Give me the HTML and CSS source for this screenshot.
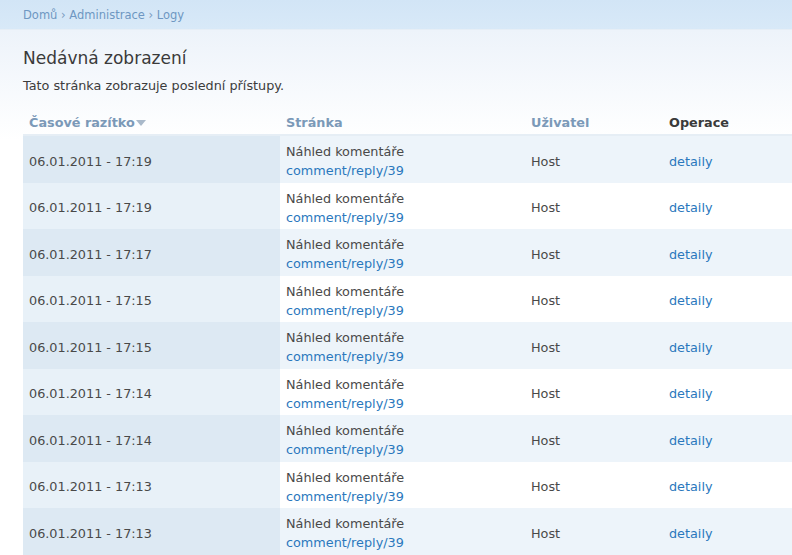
FILE: index.html
```html
<!DOCTYPE html>
<html lang="cs">
<head>
<meta charset="utf-8">
<title>Nedávná zobrazení</title>
<link rel="stylesheet" href="styles.css">
</head>
<body>
<div class="topbar">
  <nav class="breadcrumb"><a href="#">Domů</a> › <a href="#">Administrace</a> › <a href="#">Logy</a></nav>
</div>
<main class="content">
  <h2 class="title">Nedávná zobrazení</h2>
  <p class="desc">Tato stránka zobrazuje poslední přístupy.</p>
  <table class="log">
    <colgroup>
      <col class="c-time"><col class="c-page"><col class="c-user"><col class="c-op">
    </colgroup>
    <thead>
      <tr>
        <th class="sort"><a href="#">Časové razítko</a><span class="arrow"></span></th>
        <th class="sort"><a href="#">Stránka</a></th>
        <th class="sort"><a href="#">Uživatel</a></th>
        <th>Operace</th>
      </tr>
    </thead>
    <tbody>
      <tr class="odd"><td class="active">06.01.2011 - 17:19</td><td>Náhled komentáře<br><a href="#">comment/reply/39</a></td><td>Host</td><td><a href="#">detaily</a></td></tr>
      <tr class="even"><td class="active">06.01.2011 - 17:19</td><td>Náhled komentáře<br><a href="#">comment/reply/39</a></td><td>Host</td><td><a href="#">detaily</a></td></tr>
      <tr class="odd"><td class="active">06.01.2011 - 17:17</td><td>Náhled komentáře<br><a href="#">comment/reply/39</a></td><td>Host</td><td><a href="#">detaily</a></td></tr>
      <tr class="even"><td class="active">06.01.2011 - 17:15</td><td>Náhled komentáře<br><a href="#">comment/reply/39</a></td><td>Host</td><td><a href="#">detaily</a></td></tr>
      <tr class="odd"><td class="active">06.01.2011 - 17:15</td><td>Náhled komentáře<br><a href="#">comment/reply/39</a></td><td>Host</td><td><a href="#">detaily</a></td></tr>
      <tr class="even"><td class="active">06.01.2011 - 17:14</td><td>Náhled komentáře<br><a href="#">comment/reply/39</a></td><td>Host</td><td><a href="#">detaily</a></td></tr>
      <tr class="odd"><td class="active">06.01.2011 - 17:14</td><td>Náhled komentáře<br><a href="#">comment/reply/39</a></td><td>Host</td><td><a href="#">detaily</a></td></tr>
      <tr class="even"><td class="active">06.01.2011 - 17:13</td><td>Náhled komentáře<br><a href="#">comment/reply/39</a></td><td>Host</td><td><a href="#">detaily</a></td></tr>
      <tr class="odd"><td class="active">06.01.2011 - 17:13</td><td>Náhled komentáře<br><a href="#">comment/reply/39</a></td><td>Host</td><td><a href="#">detaily</a></td></tr>
    </tbody>
  </table>
</main>
</body>
</html>
```
FILE: styles.css
```css
html, body {
  margin: 0;
  padding: 0;
  overflow: hidden;
}
body {
  font-family: "DejaVu Sans", Verdana, sans-serif;
  font-size: 12.8px;
  color: #494949;
  background: #fff;
}
a {
  color: #2a78bd;
  text-decoration: none;
}
.topbar {
  height: 29px;
  background: linear-gradient(#d2e5f6, #d8e9f8);
  border-bottom: 1px solid #e6eef6;
  display: flex;
  align-items: center;
  padding-left: 23px;
}
.breadcrumb {
  font-size: 11.5px;
  color: #7a9cc0;
}
.breadcrumb a {
  color: #6e97c2;
}
.content {
  background: linear-gradient(#edf3fa 0px, #ffffff 110px);
  padding: 15px 0 0 23px;
}
.title {
  margin: 0;
  font-size: 17px;
  font-weight: normal;
  line-height: 26px;
  color: #3a3a3a;
}
.desc {
  margin: 5px 0 0;
  line-height: 20px;
  color: #3c3c3c;
}
.log {
  margin-top: 15px;
  width: 769px;
  border-collapse: collapse;
  table-layout: fixed;
}
.c-time { width: 257px; }
.c-page { width: 245px; }
.c-user { width: 138px; }
.c-op { width: 129px; }
.log th {
  text-align: left;
  font-weight: bold;
  color: #3a3a3a;
  padding: 2px 6px 1px;
  line-height: 20px;
  border-bottom: 2px solid #e6eef5;
}
.log th.sort a {
  color: #7b99b8;
}
.arrow {
  display: inline-block;
  width: 0;
  height: 0;
  border-left: 5px solid transparent;
  border-right: 5px solid transparent;
  border-top: 6px solid #a9b9ca;
  margin-left: 1px;
  vertical-align: 1px;
}
.log td {
  padding: 6px 6px 2px;
  line-height: 19.25px;
  height: 38.5px;
  vertical-align: middle;
}
.log tr.odd td { background: #edf4fa; }
.log tr.even td { background: #ffffff; }
.log tr.odd td.active { background: #dde9f3; }
.log tr.even td.active { background: #e8f1f8; }
```
